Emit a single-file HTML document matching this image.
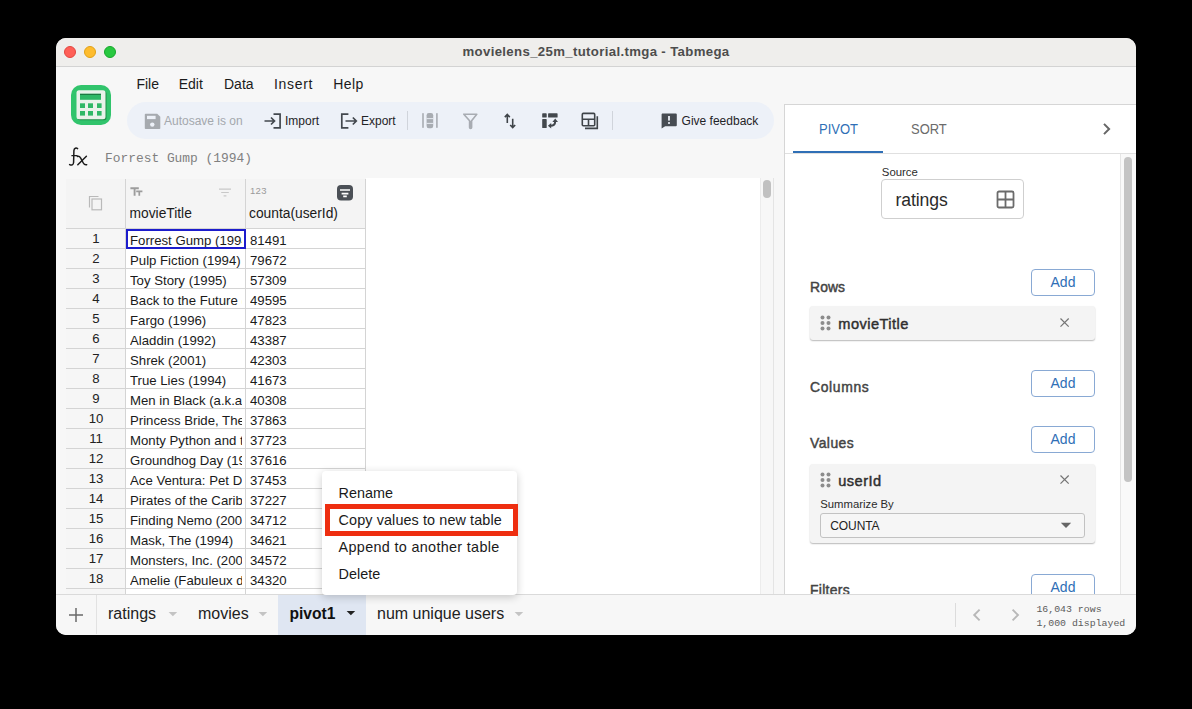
<!DOCTYPE html>
<html><head><meta charset="utf-8">
<style>
*{box-sizing:border-box;margin:0;padding:0}
html,body{width:1192px;height:709px;background:#000;overflow:hidden;font-family:"Liberation Sans",sans-serif}
.a{position:absolute;white-space:nowrap}
#win{position:absolute;left:56px;top:38px;width:1080px;height:597px;border-radius:10px;background:#f7f7f7;overflow:hidden}
.tl{position:absolute;width:12px;height:12px;border-radius:50%}
.menu{position:absolute;font-size:14px;color:#1b1b1b;line-height:16px}
.tbt{position:absolute;font-size:12px;color:#1f2327;line-height:14px}
.sep{position:absolute;width:1px;background:#d0d4db}
.cell{position:absolute;overflow:hidden;white-space:nowrap;font-size:13.2px;color:#1a1a1a;line-height:16px}
.rn{position:absolute;text-align:center;font-size:13.2px;color:#222;line-height:16px}
.hl{position:absolute;height:1px;background:#d4d4d4}
.vl{position:absolute;width:1px;background:#d4d4d4}
.lbl{position:absolute;font-weight:normal;-webkit-text-stroke:0.45px #434343;font-size:13.9px;letter-spacing:0.45px;color:#434343;line-height:16px}
.add{position:absolute;width:64px;height:27px;border:1px solid #89a9d4;border-radius:4px;color:#2f6fb6;font-size:14px;text-align:center;line-height:25px;background:#fff}
.chip{position:absolute;background:#f4f4f4;border-radius:3px;box-shadow:0 1px 1.5px rgba(0,0,0,.28)}
.tab{position:absolute;font-size:16px;color:#222;line-height:18px}
.mi{position:absolute;font-size:14.4px;color:#1a1a1a;line-height:17px}
svg{position:absolute;overflow:visible}
</style></head><body>
<div id="win">
<div class="a" style="left:0px;top:0px;width:1080px;height:29px;background:#efeeec;border-bottom:1px solid #d3d3d3"></div>
<div class="tl" style="left:8px;top:8px;background:#fe5f57;border:0.5px solid #e2463f"></div>
<div class="tl" style="left:28px;top:8px;background:#febc2e;border:0.5px solid #e1a116"></div>
<div class="tl" style="left:48px;top:8px;background:#28c840;border:0.5px solid #17a72b"></div>
<div class="a" style="left:0px;top:6px;width:1080px;text-align:center;font-weight:bold;font-size:13.2px;letter-spacing:0.35px;color:#4d4d4d;line-height:16px">movielens_25m_tutorial.tmga - Tabmega</div>
<svg style="left:15px;top:47px;width:40px;height:40px;" width="40" height="40" viewBox="0 0 40 40">
<rect x="0" y="0" width="40" height="40" rx="10" fill="#31c46c"/>
<rect x="6.5" y="6.2" width="29" height="29" rx="2.5" fill="#1f8f48"/>
<rect x="5.5" y="5.2" width="29" height="29" rx="2.5" fill="#e9f2ea"/>
<rect x="9" y="8.8" width="21" height="6" fill="#2fb866"/>
<rect x="9" y="8.8" width="21" height="1.2" fill="#1d7a42"/>
<rect x="9" y="18.3" width="5" height="4.7" fill="#2fb866"/><rect x="17" y="18.3" width="5" height="4.7" fill="#2fb866"/><rect x="26" y="18.3" width="4.6" height="4.7" fill="#2fb866"/>
<rect x="9" y="26" width="5" height="4.6" fill="#2fb866"/><rect x="17" y="26" width="5" height="4.6" fill="#2fb866"/><rect x="26" y="26" width="4.6" height="4.6" fill="#2fb866"/>
</svg>
<div class="menu" style="left:80.4px;top:38px;letter-spacing:0px">File</div>
<div class="menu" style="left:122.69999999999999px;top:38px;letter-spacing:0px">Edit</div>
<div class="menu" style="left:168px;top:38px;letter-spacing:0px">Data</div>
<div class="menu" style="left:218px;top:38px;letter-spacing:0.7px">Insert</div>
<div class="menu" style="left:277.3px;top:38px;letter-spacing:0.4px">Help</div>
<div class="a" style="left:71px;top:64px;width:647px;height:37px;border-radius:18.5px;background:#edf1f8"></div>
<svg style="left:87.5px;top:74.5px;width:17px;height:17px;" width="17" height="17" viewBox="0 0 17 17">
<path d="M0.8 1.5a.8.8 0 0 1 .8-.8h11.6l3.1 3.1v11.4a.8.8 0 0 1-.8.8H1.6a.8.8 0 0 1-.8-.8z" fill="#a6aaaf"/>
<rect x="3" y="2.8" width="8.6" height="3.3" fill="#edf1f8"/>
<circle cx="8.3" cy="11.6" r="2.2" fill="#edf1f8"/>
</svg>
<div class="tbt" style="left:108px;top:76px;color:#a4a8ad">Autosave is on</div>
<svg style="left:207px;top:75px;width:20px;height:16px;" width="20" height="16" viewBox="0 0 20 16">
<path d="M10.5 1.2h6.6v13.6h-6.6" fill="none" stroke="#43484e" stroke-width="1.7"/>
<path d="M1.5 8h10M8 4.5l3.5 3.5-3.5 3.5" fill="none" stroke="#43484e" stroke-width="1.7"/>
</svg>
<div class="tbt" style="left:229px;top:76px;">Import</div>
<svg style="left:284px;top:75px;width:20px;height:16px;" width="20" height="16" viewBox="0 0 20 16">
<path d="M8.4 1.2H1.8v13.6h6.6" fill="none" stroke="#43484e" stroke-width="1.7"/>
<path d="M5.5 8h10.5M12.8 4.5l3.5 3.5-3.5 3.5" fill="none" stroke="#43484e" stroke-width="1.7"/>
</svg>
<div class="tbt" style="left:305px;top:76px;">Export</div>
<div class="sep" style="left:351px;top:73px;width:1px;height:19px;"></div>
<svg style="left:365px;top:74px;width:18px;height:18px;" width="18" height="18" viewBox="0 0 18 18">
<rect x="1.2" y="1.2" width="1.6" height="14.6" fill="#a8acb2"/>
<rect x="15.1" y="1.2" width="1.6" height="14.6" fill="#a8acb2"/>
<rect x="5.6" y="1" width="6.6" height="15.2" rx="2.2" fill="#a8acb2"/>
<rect x="5.6" y="6.2" width="6.6" height="0.9" fill="#edf1f8"/>
<rect x="5.6" y="10.9" width="6.6" height="0.9" fill="#edf1f8"/>
</svg>
<svg style="left:407px;top:75px;width:15px;height:16px;" width="15" height="16" viewBox="0 0 15 16">
<path d="M0.8 1.2h13L8.6 7.8v6.6a1 1 0 0 1-2 0V7.8z" fill="none" stroke="#a8acb2" stroke-width="1.6" stroke-linejoin="round"/>
<path d="M6.6 8h2v6.8h-2z" fill="#a8acb2"/>
</svg>
<svg style="left:448px;top:75px;width:13px;height:16px;" width="13" height="16" viewBox="0 0 13 16">
<path d="M3.3 10V1.6M0.8 4.1l2.5-2.6 2.5 2.6" fill="none" stroke="#3f4449" stroke-width="1.6"/>
<path d="M8.7 5.8v8.6M6.2 12l2.5 2.6 2.5-2.6" fill="none" stroke="#3f4449" stroke-width="1.6"/>
</svg>
<svg style="left:486px;top:75px;width:17px;height:17px;" width="17" height="17" viewBox="0 0 17 17">
<rect x="0.2" y="0.2" width="4.5" height="4.4" rx="0.7" fill="#43484d"/>
<rect x="6.1" y="0.2" width="9.5" height="4.4" rx="0.7" fill="#43484d"/>
<rect x="0.2" y="6" width="4.5" height="9.1" rx="0.7" fill="#43484d"/>
<path d="M8.4 12.8Q13.2 12.8 13.2 8.2" fill="none" stroke="#43484d" stroke-width="2"/>
<path d="M13.2 5.6L10.4 9h5.6z" fill="#43484d"/>
<path d="M5.9 12.8L9.2 10v5.6z" fill="#43484d"/>
</svg>
<svg style="left:525px;top:74px;width:18px;height:18px;" width="18" height="18" viewBox="0 0 18 18">
<rect x="1.3" y="1.4" width="12.4" height="12.4" rx="1" fill="none" stroke="#3f4449" stroke-width="1.6"/>
<path d="M1.3 7.2h12.4M7.5 7.2v6.6" fill="none" stroke="#3f4449" stroke-width="1.6"/>
<path d="M16.3 4.2v12.2H4" fill="none" stroke="#3f4449" stroke-width="1.6"/>
</svg>
<div class="sep" style="left:556px;top:73px;width:1px;height:19px;"></div>
<svg style="left:605px;top:75px;width:16px;height:16px;" width="16" height="16" viewBox="0 0 16 16">
<path d="M1.2 0.6h13.6a1 1 0 0 1 1 1v10.6a1 1 0 0 1-1 1H4.2L0.6 15.6V1.6a1 1 0 0 1 .6-1z" fill="#474c52"/>
<rect x="7.1" y="3" width="1.8" height="4.6" fill="#edf1f8"/>
<rect x="7.1" y="9.1" width="1.8" height="1.8" fill="#edf1f8"/>
</svg>
<div class="tbt" style="left:625.6px;top:76px;">Give feedback</div>
<svg style="left:10px;top:106px;width:24px;height:24px;" width="24" height="24" viewBox="0 0 24 24">
<path d="M11.6 4.6C10.2 3.6 8.2 4 7.9 6.6L7.6 18.5C7.4 21 5.6 21.6 3.6 20.6" fill="none" stroke="#1c1c1c" stroke-width="1.5" stroke-linecap="round"/>
<path d="M5.4 11.6h6.2" fill="none" stroke="#1c1c1c" stroke-width="1.4"/>
<path d="M11.4 12.4c1.6-.4 2.5.3 3.3 1.8l2.6 4.8c.8 1.5 1.8 2 3.4 1.7" fill="none" stroke="#1c1c1c" stroke-width="1.5" stroke-linecap="round"/>
<path d="M20.4 12.2L11.8 20.8" fill="none" stroke="#1c1c1c" stroke-width="1.5" stroke-linecap="round"/>
</svg>
<div class="a" style="left:49px;top:113px;font-family:'Liberation Mono',monospace;font-size:12.9px;color:#808080;line-height:16px">Forrest Gump (1994)</div>
<div class="a" style="left:310px;top:140px;width:394px;height:416px;background:#fff"></div>
<div class="a" style="left:10px;top:141px;width:300px;height:49px;background:#f4f4f4"></div>
<div class="a" style="left:10px;top:190px;width:60px;height:366px;background:#f6f6f6"></div>
<div class="a" style="left:70px;top:191px;width:240px;height:365px;background:#fff"></div>
<div class="hl" style="left:10px;top:190px;width:300px;"></div>
<div class="hl" style="left:10px;top:210px;width:300px;"></div>
<div class="hl" style="left:10px;top:230px;width:300px;"></div>
<div class="hl" style="left:10px;top:250px;width:300px;"></div>
<div class="hl" style="left:10px;top:270px;width:300px;"></div>
<div class="hl" style="left:10px;top:290px;width:300px;"></div>
<div class="hl" style="left:10px;top:310px;width:300px;"></div>
<div class="hl" style="left:10px;top:330px;width:300px;"></div>
<div class="hl" style="left:10px;top:350px;width:300px;"></div>
<div class="hl" style="left:10px;top:370px;width:300px;"></div>
<div class="hl" style="left:10px;top:390px;width:300px;"></div>
<div class="hl" style="left:10px;top:410px;width:300px;"></div>
<div class="hl" style="left:10px;top:430px;width:300px;"></div>
<div class="hl" style="left:10px;top:450px;width:300px;"></div>
<div class="hl" style="left:10px;top:470px;width:300px;"></div>
<div class="hl" style="left:10px;top:490px;width:300px;"></div>
<div class="hl" style="left:10px;top:510px;width:300px;"></div>
<div class="hl" style="left:10px;top:530px;width:300px;"></div>
<div class="hl" style="left:10px;top:550px;width:300px;"></div>
<div class="hl" style="left:10px;top:570px;width:300px;"></div>
<div class="vl" style="left:69px;top:141px;height:415px;"></div>
<div class="vl" style="left:189px;top:141px;height:415px;"></div>
<div class="vl" style="left:309px;top:141px;height:415px;"></div>
<svg style="left:32px;top:157px;width:15px;height:16px;" width="15" height="16" viewBox="0 0 15 16">
<path d="M1.5 12.5V1.5h9" fill="none" stroke="#b9b9b9" stroke-width="1.2"/>
<rect x="4" y="4" width="9.5" height="10.8" fill="none" stroke="#b9b9b9" stroke-width="1.2"/>
</svg>
<svg style="left:74px;top:149px;width:13px;height:10px;" width="13" height="10" viewBox="0 0 13 10">
<path d="M0.4 1.2h8.4M4.6 1.2v7.6" fill="none" stroke="#9c9c9c" stroke-width="1.9"/>
<path d="M6.2 4.3h6.2M9.3 4.3v4.5" fill="none" stroke="#9c9c9c" stroke-width="1.7"/>
</svg>
<svg style="left:162px;top:149px;width:14px;height:11px;" width="14" height="11" viewBox="0 0 14 11">
<path d="M1 2.2h12M3.2 5.5h7.6M5.6 8.9h2.8" fill="none" stroke="#c8c8c8" stroke-width="1.2"/>
</svg>
<div class="a" style="left:194px;top:147px;font-size:9.5px;color:#9a9a9a;line-height:12px;letter-spacing:0.3px">123</div>
<svg style="left:281px;top:147px;width:16px;height:16px;" width="16" height="16" viewBox="0 0 16 16">
<rect x="0" y="0" width="16" height="15.6" rx="4" fill="#4b5056"/>
<path d="M3 5h10M4.6 8.6h6.8M6.2 11.4h3.6" fill="none" stroke="#fff" stroke-width="1.7"/>
</svg>
<div class="cell" style="left:73.5px;top:168px;width:110px;font-size:13.8px">movieTitle</div>
<div class="cell" style="left:193px;top:168px;width:110px;font-size:13.8px">counta(userId)</div>
<div class="rn" style="left:10px;top:193px;width:60px;">1</div>
<div class="cell" style="left:74px;top:195px;width:112px;">Forrest Gump (1994)</div>
<div class="cell" style="left:194px;top:195px;width:110px;">81491</div>
<div class="rn" style="left:10px;top:213px;width:60px;">2</div>
<div class="cell" style="left:74px;top:215px;width:112px;">Pulp Fiction (1994)</div>
<div class="cell" style="left:194px;top:215px;width:110px;">79672</div>
<div class="rn" style="left:10px;top:233px;width:60px;">3</div>
<div class="cell" style="left:74px;top:235px;width:112px;">Toy Story (1995)</div>
<div class="cell" style="left:194px;top:235px;width:110px;">57309</div>
<div class="rn" style="left:10px;top:253px;width:60px;">4</div>
<div class="cell" style="left:74px;top:255px;width:112px;">Back to the Future (1985)</div>
<div class="cell" style="left:194px;top:255px;width:110px;">49595</div>
<div class="rn" style="left:10px;top:273px;width:60px;">5</div>
<div class="cell" style="left:74px;top:275px;width:112px;">Fargo (1996)</div>
<div class="cell" style="left:194px;top:275px;width:110px;">47823</div>
<div class="rn" style="left:10px;top:293px;width:60px;">6</div>
<div class="cell" style="left:74px;top:295px;width:112px;">Aladdin (1992)</div>
<div class="cell" style="left:194px;top:295px;width:110px;">43387</div>
<div class="rn" style="left:10px;top:313px;width:60px;">7</div>
<div class="cell" style="left:74px;top:315px;width:112px;">Shrek (2001)</div>
<div class="cell" style="left:194px;top:315px;width:110px;">42303</div>
<div class="rn" style="left:10px;top:333px;width:60px;">8</div>
<div class="cell" style="left:74px;top:335px;width:112px;">True Lies (1994)</div>
<div class="cell" style="left:194px;top:335px;width:110px;">41673</div>
<div class="rn" style="left:10px;top:353px;width:60px;">9</div>
<div class="cell" style="left:74px;top:355px;width:112px;">Men in Black (a.k.a. MIB) (1997)</div>
<div class="cell" style="left:194px;top:355px;width:110px;">40308</div>
<div class="rn" style="left:10px;top:373px;width:60px;">10</div>
<div class="cell" style="left:74px;top:375px;width:112px;">Princess Bride, The (1987)</div>
<div class="cell" style="left:194px;top:375px;width:110px;">37863</div>
<div class="rn" style="left:10px;top:393px;width:60px;">11</div>
<div class="cell" style="left:74px;top:395px;width:112px;">Monty Python and the Holy Grail (1975)</div>
<div class="cell" style="left:194px;top:395px;width:110px;">37723</div>
<div class="rn" style="left:10px;top:413px;width:60px;">12</div>
<div class="cell" style="left:74px;top:415px;width:112px;">Groundhog Day (1993)</div>
<div class="cell" style="left:194px;top:415px;width:110px;">37616</div>
<div class="rn" style="left:10px;top:433px;width:60px;">13</div>
<div class="cell" style="left:74px;top:435px;width:112px;">Ace Ventura: Pet Detective (1994)</div>
<div class="cell" style="left:194px;top:435px;width:110px;">37453</div>
<div class="rn" style="left:10px;top:453px;width:60px;">14</div>
<div class="cell" style="left:74px;top:455px;width:112px;">Pirates of the Caribbean (2003)</div>
<div class="cell" style="left:194px;top:455px;width:110px;">37227</div>
<div class="rn" style="left:10px;top:473px;width:60px;">15</div>
<div class="cell" style="left:74px;top:475px;width:112px;">Finding Nemo (2003)</div>
<div class="cell" style="left:194px;top:475px;width:110px;">34712</div>
<div class="rn" style="left:10px;top:493px;width:60px;">16</div>
<div class="cell" style="left:74px;top:495px;width:112px;">Mask, The (1994)</div>
<div class="cell" style="left:194px;top:495px;width:110px;">34621</div>
<div class="rn" style="left:10px;top:513px;width:60px;">17</div>
<div class="cell" style="left:74px;top:515px;width:112px;">Monsters, Inc. (2001)</div>
<div class="cell" style="left:194px;top:515px;width:110px;">34572</div>
<div class="rn" style="left:10px;top:533px;width:60px;">18</div>
<div class="cell" style="left:74px;top:535px;width:112px;">Amelie (Fabuleux destin d'Amélie Poulain, Le) (2001)</div>
<div class="cell" style="left:194px;top:535px;width:110px;">34320</div>
<div class="rn" style="left:10px;top:553px;width:60px;">19</div>
<div class="cell" style="left:74px;top:555px;width:112px;">Gladiator (2000)</div>
<div class="cell" style="left:194px;top:555px;width:110px;">34000</div>
<div class="a" style="left:70px;top:191px;width:120px;height:20px;border:2px solid #1c1ccc"></div>
<div class="a" style="left:704px;top:140px;width:14px;height:416px;background:#f7f7f7;border-right:1px solid #e4e4e4;border-left:1px solid #ececec"></div>
<div class="a" style="left:707px;top:142px;width:8px;height:18px;background:#c1c1c1;border-radius:4px"></div>
<div class="a" style="left:728px;top:66px;width:352px;height:490px;background:#fff;border-left:1px solid #d6d6d6;border-top:1px solid #d6d6d6"></div>
<div class="a" style="left:729px;top:115px;width:351px;height:1px;background:#e0e0e0"></div>
<div class="a" style="left:737px;top:112.5px;width:90px;height:2.5px;background:#2f6fb6"></div>
<div class="a" style="left:762.6px;top:83px;font-size:14px;transform:scaleX(0.93);transform-origin:0 0;color:#2f6fb6;line-height:16px">PIVOT</div>
<div class="a" style="left:854.7px;top:83px;font-size:14px;transform:scaleX(0.925);transform-origin:0 0;color:#6b6b6b;line-height:16px">SORT</div>
<svg style="left:1045px;top:84px;width:12px;height:14px;" width="12" height="14" viewBox="0 0 12 14">
<path d="M3 1.9l5.1 5.1L3 12.1" fill="none" stroke="#666" stroke-width="2"/>
</svg>
<div class="a" style="left:1064px;top:116px;width:16px;height:440px;background:#f9f9f9;border-left:1px solid #e6e6e6"></div>
<div class="a" style="left:1068px;top:119px;width:8px;height:325px;background:#c4c4c4;border-radius:4px"></div>
<div class="a" style="left:825.8px;top:128px;font-size:11.4px;color:#2b2b2b;line-height:13px">Source</div>
<div class="a" style="left:825px;top:141px;width:143px;height:40px;border:1px solid #cfcfcf;border-radius:4px;background:#fff"></div>
<div class="a" style="left:839.5px;top:151.5px;font-size:17.6px;letter-spacing:-0.1px;color:#2a2a2a;line-height:20px">ratings</div>
<svg style="left:939.5px;top:151.6px;width:19px;height:19px;" width="19" height="19" viewBox="0 0 19 19">
<rect x="1.5" y="1.5" width="16" height="16" rx="1.5" fill="none" stroke="#6b6b6b" stroke-width="1.8"/>
<path d="M9.5 1.5v16M1.5 9.5h16" fill="none" stroke="#6b6b6b" stroke-width="1.8"/>
</svg>
<div class="lbl" style="left:754px;top:241.2px;letter-spacing:0.1px">Rows</div>
<div class="add" style="left:975px;top:231px;">Add</div>
<div class="chip" style="left:754px;top:268px;width:285px;height:34px;"></div>
<svg style="left:764px;top:277px;width:11px;height:16px;" width="11" height="16" viewBox="0 0 11 16"><circle cx="2.5" cy="2.5" r="2" fill="#8c8c8c"/><circle cx="8.5" cy="2.5" r="2" fill="#8c8c8c"/><circle cx="2.5" cy="8" r="2" fill="#8c8c8c"/><circle cx="8.5" cy="8" r="2" fill="#8c8c8c"/><circle cx="2.5" cy="13.5" r="2" fill="#8c8c8c"/><circle cx="8.5" cy="13.5" r="2" fill="#8c8c8c"/></svg>
<div class="lbl" style="left:782.3px;top:278px;font-size:14.6px;-webkit-text-stroke:0.45px #2f2f2f;color:#2f2f2f">movieTitle</div>
<svg style="left:1003px;top:279px;width:11px;height:11px;" width="11" height="11" viewBox="0 0 11 11"><path d="M1.5 1.5l8.2 8.2M9.7 1.5l-8.2 8.2" fill="none" stroke="#747474" stroke-width="1.2"/></svg>
<div class="lbl" style="left:754px;top:341.4px;letter-spacing:0.65px">Columns</div>
<div class="add" style="left:975px;top:332px;">Add</div>
<div class="lbl" style="left:754px;top:397.4px;">Values</div>
<div class="add" style="left:975px;top:388px;">Add</div>
<div class="chip" style="left:754px;top:426px;width:285px;height:79px;"></div>
<svg style="left:764px;top:434px;width:11px;height:16px;" width="11" height="16" viewBox="0 0 11 16"><circle cx="2.5" cy="2.5" r="2" fill="#8c8c8c"/><circle cx="8.5" cy="2.5" r="2" fill="#8c8c8c"/><circle cx="2.5" cy="8" r="2" fill="#8c8c8c"/><circle cx="8.5" cy="8" r="2" fill="#8c8c8c"/><circle cx="2.5" cy="13.5" r="2" fill="#8c8c8c"/><circle cx="8.5" cy="13.5" r="2" fill="#8c8c8c"/></svg>
<div class="lbl" style="left:782.3px;top:435px;font-size:14.6px;-webkit-text-stroke:0.45px #2f2f2f;color:#2f2f2f">userId</div>
<svg style="left:1003px;top:436px;width:11px;height:11px;" width="11" height="11" viewBox="0 0 11 11"><path d="M1.5 1.5l8.2 8.2M9.7 1.5l-8.2 8.2" fill="none" stroke="#747474" stroke-width="1.2"/></svg>
<div class="a" style="left:764.3px;top:460px;font-size:11.3px;color:#2b2b2b;line-height:13px">Summarize By</div>
<div class="a" style="left:764px;top:475px;width:265px;height:25px;border:1px solid #c2c2c2;border-radius:3px;background:#f6f6f6"></div>
<div class="a" style="left:774.3px;top:480.5px;font-size:12px;letter-spacing:-0.1px;color:#222;line-height:14px">COUNTA</div>
<svg style="left:1004px;top:484px;width:12px;height:7px;" width="12" height="7" viewBox="0 0 12 7"><path d="M0.8 0.8h10.4L6 6z" fill="#666"/></svg>
<div class="lbl" style="left:754px;top:544.4px;letter-spacing:0.3px">Filters</div>
<div class="add" style="left:975px;top:536px;">Add</div>
<div class="a" style="left:0px;top:556px;width:1080px;height:41px;background:#f7f7f7;border-top:1px solid #dadada"></div>
<div class="a" style="left:40px;top:557px;width:1px;height:39px;background:#e2e2e2"></div>
<svg style="left:12px;top:569px;width:16px;height:16px;" width="16" height="16" viewBox="0 0 16 16"><path d="M8 1v14M1 8h14" fill="none" stroke="#6a6a6a" stroke-width="1.5"/></svg>
<div class="a" style="left:222px;top:557px;width:88px;height:40px;background:#dfe6f2"></div>
<div class="tab" style="left:52px;top:567px;">ratings</div>
<svg style="left:112px;top:572.5px;width:10px;height:6px;" width="10" height="6" viewBox="0 0 10 6"><path d="M0.6 1h8.6L4.9 5.2z" fill="#c4c4c4"/></svg>
<div class="tab" style="left:142px;top:567px;">movies</div>
<svg style="left:202px;top:572.5px;width:10px;height:6px;" width="10" height="6" viewBox="0 0 10 6"><path d="M0.6 1h8.6L4.9 5.2z" fill="#c4c4c4"/></svg>
<div class="tab" style="left:233.5px;top:567.4px;font-weight:bold;font-size:15.6px;color:#111">pivot1</div>
<svg style="left:289.8px;top:572.2px;width:10px;height:6px;" width="10" height="6" viewBox="0 0 10 6"><path d="M0.6 1h8.6L4.9 5.2z" fill="#222"/></svg>
<div class="tab" style="left:321px;top:567px;">num unique users</div>
<svg style="left:458px;top:572.5px;width:10px;height:6px;" width="10" height="6" viewBox="0 0 10 6"><path d="M0.6 1h8.6L4.9 5.2z" fill="#c4c4c4"/></svg>
<div class="a" style="left:899px;top:565px;width:1px;height:24px;background:#dcdcdc"></div>
<svg style="left:914px;top:570px;width:12px;height:14px;" width="12" height="14" viewBox="0 0 12 14"><path d="M9.6 1.6L4.2 7l5.4 5.4" fill="none" stroke="#b8b8b8" stroke-width="1.9"/></svg>
<svg style="left:954px;top:570px;width:12px;height:14px;" width="12" height="14" viewBox="0 0 12 14"><path d="M2.6 1.6L8 7l-5.4 5.4" fill="none" stroke="#b8b8b8" stroke-width="1.9"/></svg>
<div class="a" style="left:980.4000000000001px;top:565px;font-family:'Liberation Mono',monospace;font-size:9.9px;color:#5c5c5c;line-height:14px">16,043 rows<br>1,000 displayed</div>
<div class="a" style="left:266px;top:433px;width:195px;height:124px;background:#fff;border-radius:4px;box-shadow:0 2px 9px rgba(0,0,0,.2)"></div>
<div class="mi" style="left:282.6px;top:447px;letter-spacing:0px">Rename</div>
<div class="mi" style="left:282.6px;top:474px;letter-spacing:0.1px">Copy values to new table</div>
<div class="mi" style="left:282.6px;top:501px;letter-spacing:0.32px">Append to another table</div>
<div class="mi" style="left:282.6px;top:528px;letter-spacing:0px">Delete</div>
<div class="a" style="left:269px;top:466px;width:193px;height:32px;border:5px solid #ee2e10"></div>
</div></body></html>
